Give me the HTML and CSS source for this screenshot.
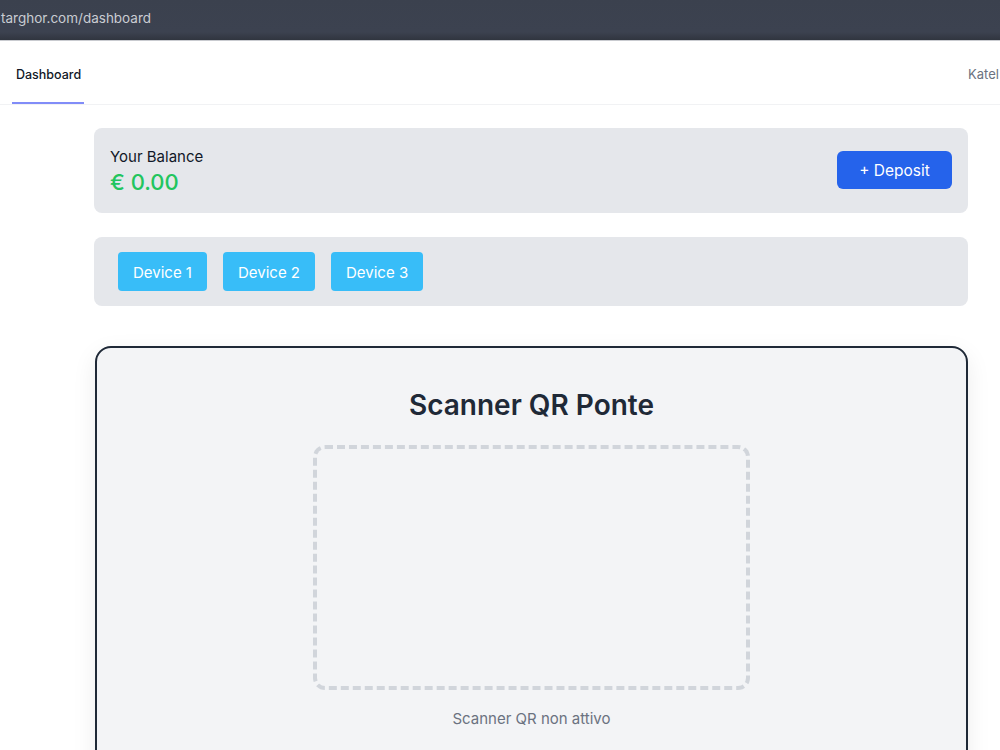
FILE: index.html
```html
<!DOCTYPE html>
<html lang="it">
<head>
<meta charset="utf-8">
<title>Dashboard</title>
<link rel="stylesheet" href="styles.css">
</head>
<body>
<div class="urlbar"><span class="url">targhor.com/dashboard</span></div>
<nav class="nav">
  <a class="tab active">Dashboard</a>
  <span class="user">Katel</span>
</nav>
<main class="main">
  <section class="card balance">
    <div class="bal-info">
      <div class="bal-label">Your Balance</div>
      <div class="bal-amount">€ 0.00</div>
    </div>
    <button class="deposit">+ Deposit</button>
  </section>
  <section class="card devices">
    <button class="device">Device 1</button>
    <button class="device">Device 2</button>
    <button class="device">Device 3</button>
  </section>
  <section class="scanner">
    <h2 class="scan-title">Scanner QR Ponte</h2>
    <div class="scan-box"></div>
    <p class="scan-status">Scanner QR non attivo</p>
  </section>
</main>
</body>
</html>
```
FILE: styles.css
```css
* { box-sizing: border-box; }
html, body { margin: 0; padding: 0; }
body {
  width: 1000px;
  height: 750px;
  overflow: hidden;
  background: #ffffff;
  font-family: Inter, "Noto Sans", sans-serif;
  color: #111827;
}
.urlbar {
  height: 41px;
  background: linear-gradient(#3b414e 0, #3c4250 80%, #30353f 100%);
  border-bottom: 1px solid #c9cbd0;
  display: flex;
  align-items: center;
  padding-left: 1px;
  padding-bottom: 5px;
}
.url {
  color: #c9ccd2;
  font-size: 13.5px;
}
.nav {
  height: 64px;
  display: flex;
  align-items: stretch;
  justify-content: space-between;
  border-bottom: 1px solid #f1f2f4;
  padding-left: 12px;
}
.tab {
  display: flex;
  align-items: center;
  padding: 6px 3px 0 4px;
  font-size: 12.5px;
  font-weight: 500;
  color: #111827;
  border-bottom: 2px solid #818cf8;
}
.user {
  display: flex;
  align-items: center;
  padding-top: 2px;
  font-size: 13px;
  color: #6b7280;
  margin-right: -8px;
  width: 40px;
  overflow: hidden;
  white-space: nowrap;
}
.main {
  padding: 23px 0 0 94px;
  width: 968px;
  display: flex;
  flex-direction: column;
}
.card {
  background: #e5e7eb;
  border-radius: 8px;
}
.balance {
  height: 85px;
  display: flex;
  align-items: center;
  justify-content: space-between;
  padding: 0 16px 0 16px;
}
.bal-label {
  font-size: 15px;
  color: #111827;
}
.bal-amount {
  font-size: 22px;
  font-weight: 500;
  color: #22c55e;
  margin-top: 3px;
}
.deposit {
  font-family: inherit;
  border: none;
  background: #2563eb;
  color: #ffffff;
  font-size: 15.5px;
  width: 115px;
  height: 38px;
  padding-top: 2px;
  border-radius: 6px;
  margin-top: -1px;
}
.devices {
  margin-top: 24px;
  height: 69px;
  display: flex;
  align-items: center;
  gap: 16px;
  padding-left: 24px;
}
.device {
  font-family: inherit;
  border: none;
  background: #38bdf8;
  color: #ffffff;
  font-size: 15px;
  height: 39px;
  padding: 2px 15px 0;
  border-radius: 4px;
}
.scanner {
  margin-top: 40px;
  margin-left: 1px;
  height: 440px;
  background: #f3f4f6;
  border: 2px solid #1f2937;
  border-radius: 16px;
  box-shadow: 0 8px 24px rgba(0,0,0,0.08);
  display: flex;
  flex-direction: column;
  align-items: center;
}
.scan-title {
  margin: 39px 0 0;
  font-size: 28px;
  font-weight: 600;
  color: #1f2937;
  line-height: 36px;
}
.scan-box {
  margin-top: 22px;
  width: 437px;
  height: 245px;
  border: 4px dashed #d1d5db;
  border-radius: 12px;
}
.scan-status {
  margin: 19px 0 0;
  font-size: 15px;
  color: #6b7280;
}
```
